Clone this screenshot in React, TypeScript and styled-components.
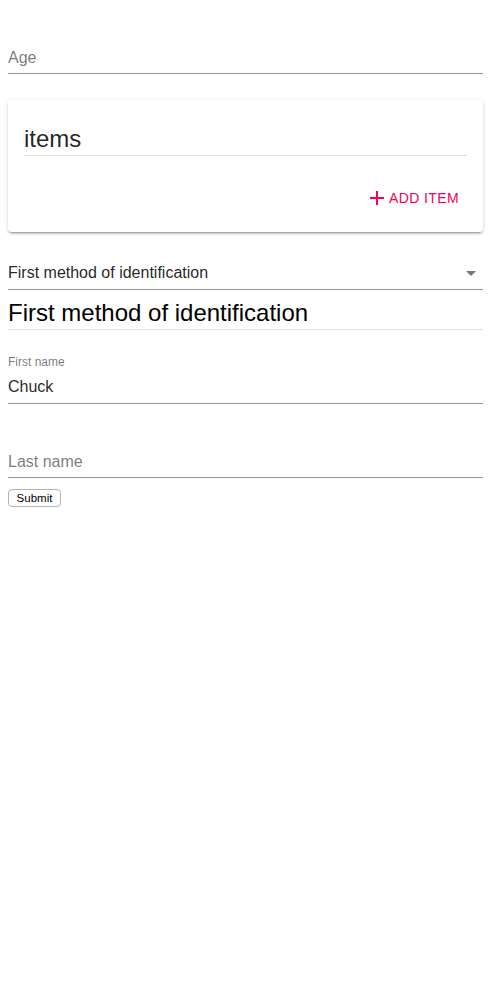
import React from "react";
import styled, { createGlobalStyle } from "styled-components";

const GlobalStyle = createGlobalStyle`
  html, body { margin: 0; padding: 0; background: #fff; }
  body { font-family: "Liberation Sans", Arial, Helvetica, sans-serif; }
  * { box-sizing: border-box; }
`;

const Page = styled.div`
  padding: 0 8px;
  display: flex;
  flex-direction: column;
  align-items: stretch;
`;

const Field = styled.div<{ $top: number }>`
  margin-top: ${(p) => p.$top}px;
  padding-top: 16px;
  display: flex;
  flex-direction: column;
`;

const ShrunkLabel = styled.label`
  margin-top: -16px;
  height: 16px;
  font-size: 12px;
  line-height: 12px;
  color: rgba(0, 0, 0, 0.54);
`;

const InputRow = styled.div<{ $placeholder?: boolean; $height?: number; $padTop?: number }>`
  height: ${(p) => p.$height ?? 32}px;
  padding-top: ${(p) => p.$padTop ?? 6}px;
  font-size: 16px;
  line-height: 19px;
  border-bottom: 1px solid rgba(0, 0, 0, 0.42);
  color: ${(p) => (p.$placeholder ? "rgba(0,0,0,0.54)" : "rgba(0,0,0,0.87)")};
  display: flex;
  align-items: flex-start;
  justify-content: space-between;
  white-space: nowrap;
`;

const SelectArrow = styled.svg`
  width: 24px;
  height: 24px;
  margin-top: -2px;
  fill: rgba(0, 0, 0, 0.54);
  flex: none;
`;

const Card = styled.section`
  margin-top: 26px;
  background: #fff;
  border-radius: 4px;
  box-shadow: 0px 3px 1px -2px rgba(0, 0, 0, 0.2), 0px 2px 2px 0px rgba(0, 0, 0, 0.14),
    0px 1px 5px 0px rgba(0, 0, 0, 0.12);
  padding: 23px 16px 16px;
  display: flex;
  flex-direction: column;
`;

const Title = styled.div<{ $color?: string; $top?: number }>`
  margin-top: ${(p) => p.$top ?? 0}px;
  font-size: 24px;
  line-height: 32px;
  color: ${(p) => p.$color ?? "rgba(0,0,0,0.87)"};
  border-bottom: 1px solid #e0e0e0;
  white-space: nowrap;
`;

const CardActions = styled.div`
  margin-top: 24px;
  display: flex;
  justify-content: flex-end;
`;

const TextButton = styled.button`
  height: 36px;
  padding: 0 8px 0 0;
  border: none;
  background: transparent;
  color: #f50057;
  font-family: "Liberation Sans", Arial, Helvetica, sans-serif;
  font-size: 14px;
  letter-spacing: 0.4px;
  text-transform: uppercase;
  display: flex;
  align-items: center;
  border-radius: 4px;
  cursor: pointer;
`;

const PlusIcon = styled.svg`
  width: 24px;
  height: 24px;
  fill: currentColor;
`;

const SubmitButton = styled.button`
  margin-top: 11px;
  align-self: flex-start;
  width: 53px;
  height: 18px;
  padding: 0;
  background: #fff;
  border: 1px solid #b4b4b4;
  border-radius: 4px;
  font-family: "Liberation Sans", Arial, Helvetica, sans-serif;
  font-size: 11.5px;
  line-height: 16px;
  color: #000;
`;

export default function App() {
  return (
    <>
      <GlobalStyle />
      <Page>
        <Field $top={26}>
          <InputRow $placeholder>Age</InputRow>
        </Field>

        <Card>
          <Title>items</Title>
          <CardActions>
            <TextButton type="button">
              <PlusIcon viewBox="0 0 24 24">
                <path d="M19 13h-6v6h-2v-6H5v-2h6V5h2v6h6v2z" />
              </PlusIcon>
              Add item
            </TextButton>
          </CardActions>
        </Card>

        <Field $top={8}>
          <InputRow $height={34} $padTop={7}>
            <span>First method of identification</span>
            <SelectArrow viewBox="0 0 24 24">
              <path d="M7 10l5 5 5-5z" />
            </SelectArrow>
          </InputRow>
        </Field>

        <Title $color="#000" $top={7}>
          First method of identification
        </Title>

        <Field $top={26}>
          <ShrunkLabel>First name</ShrunkLabel>
          <InputRow $padTop={5}>Chuck</InputRow>
        </Field>

        <Field $top={26}>
          <InputRow $placeholder>Last name</InputRow>
        </Field>

        <SubmitButton type="button">Submit</SubmitButton>
      </Page>
    </>
  );
}
